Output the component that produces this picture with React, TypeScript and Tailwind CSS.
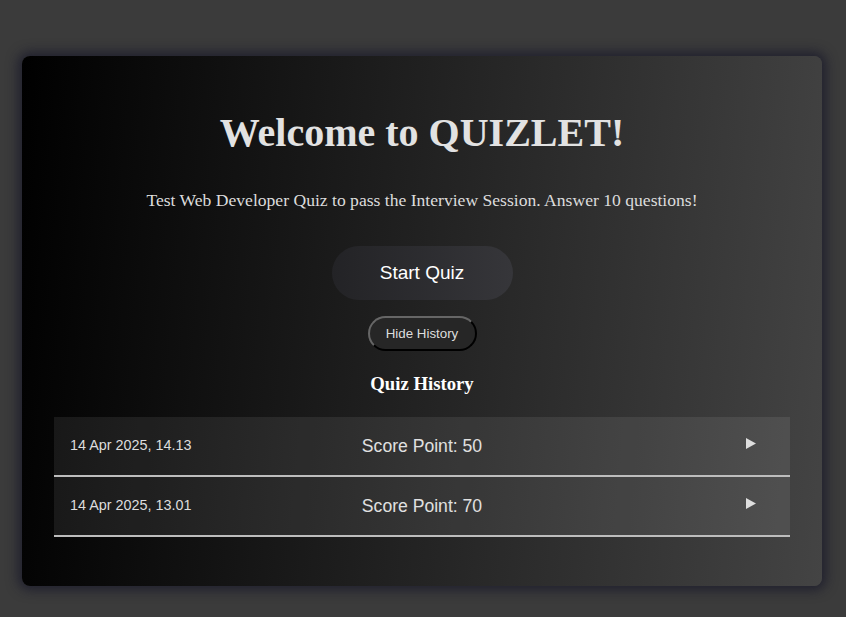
import React from "react";

const rows = [
  { date: "14 Apr 2025, 14.13", score: 50 },
  { date: "14 Apr 2025, 13.01", score: 70 },
];

export default function App() {
  return (
    <div className="min-h-screen w-full bg-[#3b3b3b] pt-[56px] pb-[31px]">
      <div className="ml-[22px] w-[800px] h-[530px] rounded-[8px] bg-[linear-gradient(95deg,#000000_0%,#444444_100%)] shadow-[0_0_12px_4px_rgba(20,20,40,0.7)] flex flex-col items-center pt-[54px] px-[32px]">
        <h1 className="font-['Liberation_Serif',serif] font-bold text-[40px] leading-[46px] text-[#e2e2e2]">
          Welcome to QUIZLET!
        </h1>
        <p className="mt-[34px] font-['Liberation_Serif',serif] text-[17.6px] leading-[20px] text-[#dcdcdc]">
          Test Web Developer Quiz to pass the Interview Session. Answer 10 questions!
        </p>
        <button className="mt-[36px] w-[181px] h-[54px] rounded-full bg-gradient-to-r from-[#232326] to-[#36363a] font-['Liberation_Sans',sans-serif] text-[19px] text-white">
          Start Quiz
        </button>
        <button className="mt-[16px] w-[109px] h-[35px] rounded-full border-2 border-t-[#666] border-l-[#666] border-r-[#000] border-b-[#000] bg-[#262626] font-['Liberation_Sans',sans-serif] text-[13.33px] text-[#dddddd]">
          Hide History
        </button>
        <h2 className="mt-[22px] font-['Liberation_Serif',serif] font-bold text-[18.72px] leading-[22px] text-white">
          Quiz History
        </h2>
        <div className="mt-[22px] w-[736px] flex flex-col">
          {rows.map((r) => (
            <div
              key={r.date}
              className="h-[60px] grid grid-cols-[1fr_auto_1fr] items-center bg-[rgba(255,255,255,0.08)] border-b-2 border-[#bdbdbd] px-[16px] font-['Liberation_Sans',sans-serif]"
            >
              <span className="text-[14.4px] text-[#dddddd]">{r.date}</span>
              <span className="text-[17.6px] text-[#e0e0e0]">Score Point: {r.score}</span>
              <span className="flex justify-end pr-[18px] -mt-[6px]">
                <svg width="10" height="11" viewBox="0 0 10 11">
                  <polygon points="0,0 10,5.5 0,11" fill="#dedede" />
                </svg>
              </span>
            </div>
          ))}
        </div>
      </div>
    </div>
  );
}
